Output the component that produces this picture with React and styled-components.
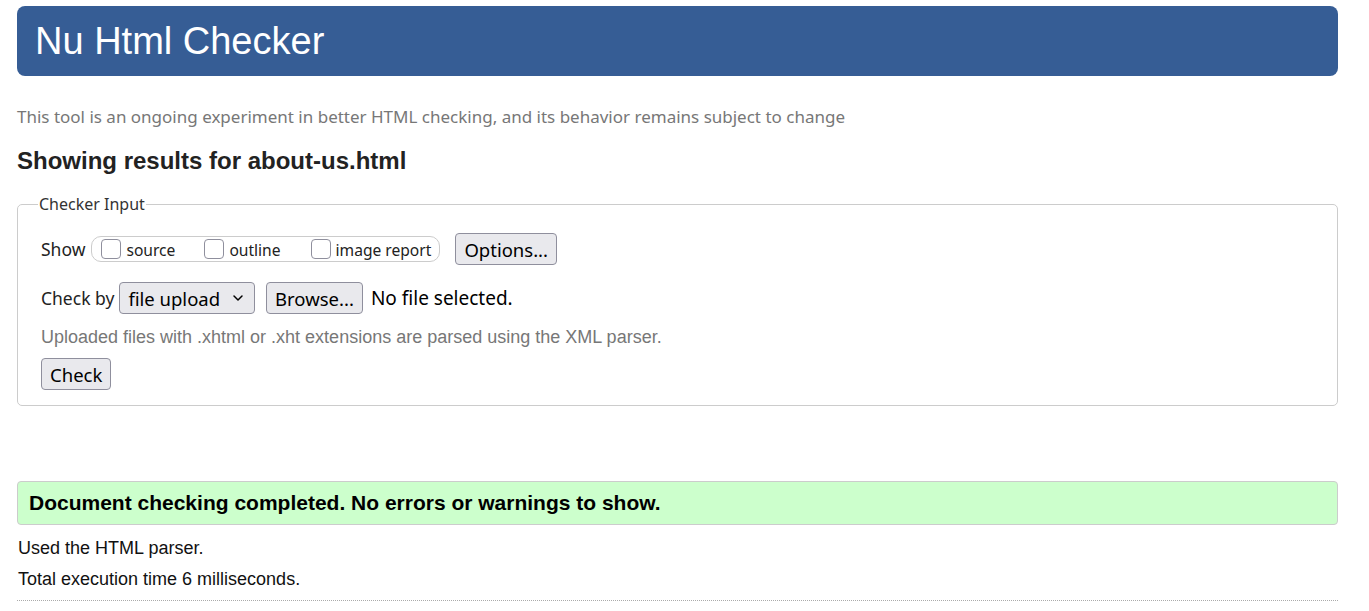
import React from "react";
import styled, { createGlobalStyle } from "styled-components";

const Global = createGlobalStyle`
  html, body { margin: 0; padding: 0; background: #fff; }
  body { font-family: "Liberation Sans", Arial, sans-serif; color: #222; }
  * { box-sizing: border-box; }
`;

const Page = styled.div`
  padding: 6px 31px 0 17px;
  display: flex;
  flex-direction: column;
`;

const Header = styled.header`
  background: #365d95;
  border-radius: 8px;
  height: 70px;
  display: flex;
  align-items: center;
  padding-left: 18px;
`;

const Title = styled.h1`
  margin: 0;
  font-family: "Liberation Sans", Arial, sans-serif;
  font-weight: normal;
  font-size: 38px;
  color: #fff;
`;

const Intro = styled.p`
  margin: 30px 0 0;
  font-family: "Noto Sans", "Open Sans", sans-serif;
  font-size: 17px;
  color: #777;
  line-height: 22px;
`;

const Heading = styled.h2`
  margin: 19px 0 0;
  font-size: 24px;
  font-weight: bold;
  line-height: 28px;
  color: #222;
`;

const Fieldset = styled.fieldset`
  margin: 19px 0 0;
  border: 1px solid #ccc;
  border-radius: 5px;
  padding: 6px 23px 15px;
  display: flex;
  flex-direction: column;
`;

const Legend = styled.legend`
  font-family: "Noto Sans", "Open Sans", sans-serif;
  font-size: 16px;
  color: #333;
  padding: 0 1px;
  margin-left: -3px;
  line-height: 20px;
`;

const Row = styled.div`
  display: flex;
  align-items: center;
  gap: ${(p) => p.$gap || 0}px;
  margin-top: ${(p) => p.$top || 0}px;
`;

const Label = styled.span`
  font-family: "Noto Sans", "Open Sans", sans-serif;
  font-size: 17.5px;
  color: #222;
  margin-right: ${(p) => p.$mr || 0}px;
`;

const Group = styled.div`
  display: flex;
  align-items: flex-start;
  height: 26px;
  border: 1px solid #ccc;
  border-radius: 10px;
  padding: 0 8px 0 9px;
`;

const CheckItem = styled.label`
  display: flex;
  align-items: center;
  gap: 5px;
  margin-right: ${(p) => p.$mr || 0}px;
  font-family: "Noto Sans", "Open Sans", sans-serif;
  font-size: 15.6px;
  color: #222;
`;

const Box = styled.input.attrs({ type: "checkbox" })`
  appearance: none;
  margin: 0;
  width: 20px;
  height: 20px;
  border: 1px solid #8f8f9d;
  border-radius: 4px;
  background: #fff;
`;

const CheckText = styled.span`
  margin-top: 2px;
`;

const Button = styled.button`
  font-family: "Noto Sans", "Open Sans", sans-serif;
  font-size: 18.5px;
  color: #000;
  background: #e9e9ed;
  border: 1px solid #8f8f9d;
  border-radius: 4px;
  height: 32px;
  padding: 0 8px;
  margin-left: ${(p) => p.$ml || 0}px;
  display: flex;
  align-items: center;
`;

const Select = styled.div`
  font-family: "Noto Sans", "Open Sans", sans-serif;
  font-size: 18.5px;
  color: #000;
  background: #e9e9ed;
  border: 1px solid #8f8f9d;
  border-radius: 4px;
  height: 32px;
  padding: 0 10px 0 8px;
  display: flex;
  align-items: center;
  gap: 12px;
`;

const FileText = styled.span`
  font-family: "Noto Sans", "Open Sans", sans-serif;
  font-size: 19px;
  color: #000;
  margin-left: 8px;
`;

const Hint = styled.p`
  margin: 12px 0 0;
  font-size: 18px;
  color: #777;
  line-height: 22px;
`;

const Success = styled.div`
  margin-top: 75px;
  background: #ccffcc;
  border: 1px solid #ccc;
  border-radius: 4px;
  height: 44px;
  display: flex;
  align-items: center;
  padding-left: 11px;
  font-size: 21px;
  font-weight: bold;
  color: #000;
`;

const Info = styled.p`
  margin: ${(p) => p.$top || 0}px 0 0 1px;
  font-size: 18px;
  color: #111;
  line-height: 22px;
`;

const Rule = styled.hr`
  margin: 10px 0 0;
  border: 0;
  border-top: 1px dotted #aaa;
`;

const Chevron = () => (
  <svg width="12" height="8" viewBox="0 0 12 8" fill="none">
    <path d="M2 2l4 4 4-4" stroke="#000" strokeWidth="1.5" strokeLinecap="round" strokeLinejoin="round" />
  </svg>
);

export default function App() {
  return (
    <>
      <Global />
      <Page>
        <Header>
          <Title>Nu Html Checker</Title>
        </Header>
        <Intro>
          This tool is an ongoing experiment in better HTML checking, and its behavior remains subject to change
        </Intro>
        <Heading>Showing results for about-us.html</Heading>
        <Fieldset>
          <Legend>Checker Input</Legend>
          <Row $top={13}>
            <Label $mr={6}>Show</Label>
            <Group>
              <CheckItem $mr={29}>
                <Box />
                <CheckText>source</CheckText>
              </CheckItem>
              <CheckItem $mr={30}>
                <Box />
                <CheckText>outline</CheckText>
              </CheckItem>
              <CheckItem>
                <Box />
                <CheckText>image report</CheckText>
              </CheckItem>
            </Group>
            <Button $ml={15}>Options...</Button>
          </Row>
          <Row $top={17}>
            <Label $mr={5}>Check by</Label>
            <Select>
              file upload
              <Chevron />
            </Select>
            <Button $ml={11}>Browse...</Button>
            <FileText>No file selected.</FileText>
          </Row>
          <Hint>Uploaded files with .xhtml or .xht extensions are parsed using the XML parser.</Hint>
          <Row $top={10}>
            <Button>Check</Button>
          </Row>
        </Fieldset>
        <Success>Document checking completed. No errors or warnings to show.</Success>
        <Info $top={12}>Used the HTML parser.</Info>
        <Info $top={9}>Total execution time 6 milliseconds.</Info>
        <Rule />
      </Page>
    </>
  );
}
